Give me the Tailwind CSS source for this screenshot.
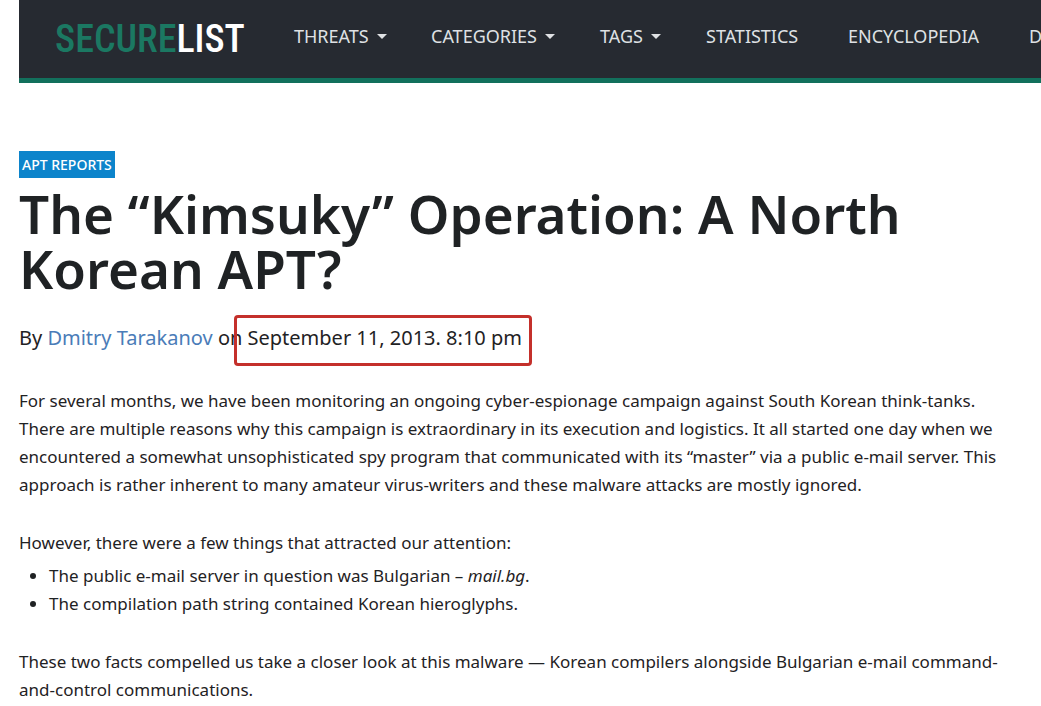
<!DOCTYPE html>
<html lang="en">
<head>
<meta charset="utf-8">
<meta name="viewport" content="width=device-width, initial-scale=1">
<title>The “Kimsuky” Operation: A North Korean APT? - Securelist</title>
<script src="https://cdn.jsdelivr.net/npm/@tailwindcss/browser@4"></script>
</head>
<body class="overflow-x-hidden bg-white pl-[19px] font-['Noto_Sans',sans-serif] text-[#1f2224]">
<header class="flex h-[83px] items-center overflow-hidden border-b-5 border-[#12705c] bg-[#262a31] pl-9">
  <a href="#" class="w-[239px] shrink-0 font-['Roboto_Condensed','Roboto',sans-serif] text-[38px] leading-none font-medium text-[#1b7862]">SECURE<span class="text-white">LIST</span></a>
  <nav class="flex shrink-0 pb-[6px] text-[18px] leading-6 whitespace-nowrap text-[#dfe1e4]">
    <button type="button" class="flex w-[137px] items-center gap-2">THREATS<svg class="h-[5px] w-[10px]" viewBox="0 0 10 5" fill="currentColor"><path d="M0 0h10L5 5z"/></svg></button>
    <button type="button" class="flex w-[169px] items-center gap-2">CATEGORIES<svg class="h-[5px] w-[10px]" viewBox="0 0 10 5" fill="currentColor"><path d="M0 0h10L5 5z"/></svg></button>
    <button type="button" class="flex w-[106px] items-center gap-2">TAGS<svg class="h-[5px] w-[10px]" viewBox="0 0 10 5" fill="currentColor"><path d="M0 0h10L5 5z"/></svg></button>
    <a href="#" class="w-[142px]">STATISTICS</a>
    <a href="#" class="w-[181px]">ENCYCLOPEDIA</a>
    <a href="#">D</a>
  </nav>
</header>
<main class="pt-[68px]">
  <a href="#" class="inline-block bg-[#0c84cb] px-[3px] text-[14px] leading-[27px] font-medium text-white">APT REPORTS</a>
  <h1 class="mt-2 text-[53px] leading-[55px] font-semibold">The “Kimsuky” Operation: A North<br>Korean APT?</h1>
  <p class="mt-7 flex items-center text-[20px] leading-7 whitespace-pre"><span>By <a href="#" class="text-[#4a7cb8]">Dmitry Tarakanov</a> on </span><time datetime="2013-09-11T20:10" class="relative">September 11, 2013. 8:10 pm<span class="absolute -top-[9px] -right-[10px] -bottom-[14px] -left-[14px] rounded-sm border-3 border-[#c4302b]"></span></time></p>
  <div class="mt-[35px] text-[17px] leading-7">
    <p>For several months, we have been monitoring an ongoing cyber-espionage campaign against South Korean think-tanks.<br>There are multiple reasons why this campaign is extraordinary in its execution and logistics. It all started one day when we<br>encountered a somewhat unsophisticated spy program that communicated with its “master” via a public e-mail server. This<br>approach is rather inherent to many amateur virus-writers and these malware attacks are mostly ignored.</p>
    <p class="mt-[30px]">However, there were a few things that attracted our attention:</p>
    <ul class="mt-[5px] list-disc pl-[30px]">
      <li>The public e-mail server in question was Bulgarian – <em>mail.bg</em>.</li>
      <li>The compilation path string contained Korean hieroglyphs.</li>
    </ul>
    <p class="mt-[30px]">These two facts compelled us take a closer look at this malware — Korean compilers alongside Bulgarian e-mail command-<br>and-control communications.</p>
  </div>
</main>
</body>
</html>
